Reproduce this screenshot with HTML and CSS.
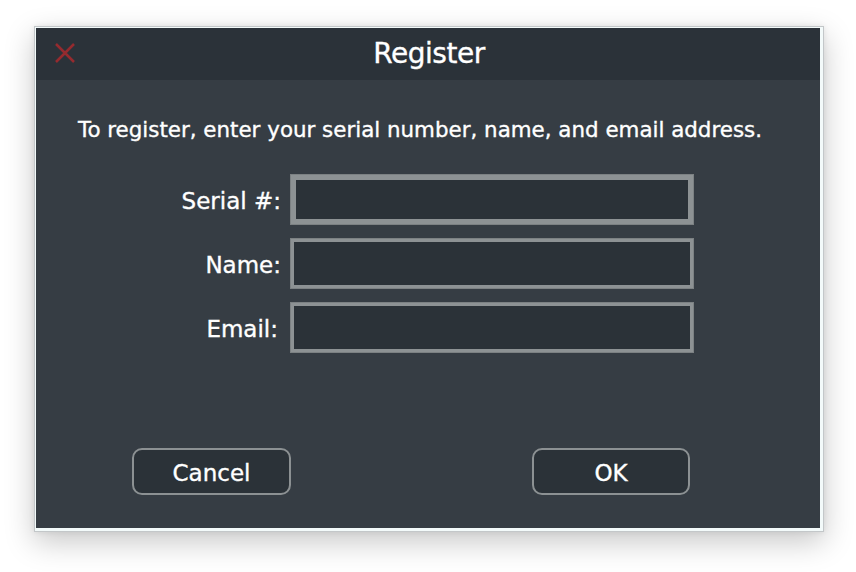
FILE: index.html
```html
<!DOCTYPE html>
<html>
<head>
<meta charset="utf-8">
<title>Register</title>
<link rel="stylesheet" href="styles.css">
</head>
<body>
<div class="window">
  <div class="inner">
    <div class="titlebar">
      <svg class="close" width="20" height="20" viewBox="0 0 20 20">
        <path d="M1 1 L19 19 M19 1 L1 19" stroke="#952b2f" stroke-width="2.5" fill="none"/>
      </svg>
      <div class="title">Register</div>
    </div>
    <div class="content">
      <p class="intro">To register, enter your serial number, name, and email address.</p>
      <div class="form">
        <label class="label">Serial #:</label>
        <div class="field focused"></div>
        <label class="label">Name:</label>
        <div class="field"></div>
        <label class="label label-email">Email:</label>
        <div class="field"></div>
      </div>
      <div class="buttons">
        <div class="btn btn-cancel">Cancel</div>
        <div class="btn btn-ok">OK</div>
      </div>
    </div>
  </div>
</div>
</body>
</html>
```
FILE: styles.css
```css
html, body {
  margin: 0;
  padding: 0;
  background: #ffffff;
}
body {
  width: 856px;
  height: 572px;
  overflow: hidden;
  font-family: "DejaVu Sans", "Liberation Sans", sans-serif;
  color: #ffffff;
  -webkit-text-stroke: 0.35px #ffffff;
}
.window {
  margin: 26px 0 0 34px;
  width: 786px;
  height: 502px;
  border: 1px solid #c3c7c9;
  padding: 1px;
  background: #f3fafa;
  box-shadow: 0 10px 28px rgba(0, 0, 0, 0.22), 0 0 6px rgba(0, 0, 0, 0.08);
}
.inner {
  width: 784px;
  height: 500px;
  background: #363d44;
  display: flex;
  flex-direction: column;
}
.titlebar {
  position: relative;
  height: 52px;
  background: #2b3239;
  display: flex;
  align-items: center;
  justify-content: center;
}
.close {
  position: absolute;
  left: 19px;
  top: 15px;
}
.title {
  font-size: 28px;
  letter-spacing: -0.5px;
  line-height: 52px;
  padding-left: 2px;
}
.content {
  flex: 1;
  display: flex;
  flex-direction: column;
}
.intro {
  margin: 38px 0 0 0;
  padding-right: 16px;
  text-align: center;
  font-size: 21.4px;
  line-height: 24px;
}
.form {
  margin-top: 32px;
  display: grid;
  grid-template-columns: 245px 404px;
  grid-auto-rows: 51px;
  column-gap: 9px;
  row-gap: 13px;
}
.label {
  font-size: 23px;
  display: flex;
  align-items: center;
  justify-content: flex-end;
  padding-top: 2px;
}
.label-email {
  padding-right: 3px;
}
.field {
  box-sizing: border-box;
  background: #2b3238;
  border: 4px solid #8d9294;
  outline: 1px solid #7c8183;
  outline-offset: -1px;
}
.field.focused {
  border-width: 6px;
}
.buttons {
  margin-top: 95px;
  display: flex;
  padding-left: 96px;
  gap: 241px;
}
.btn {
  box-sizing: border-box;
  width: 159px;
  height: 47px;
  border: 2px solid #8c9193;
  border-radius: 10px;
  background: #2b3238;
  font-size: 23px;
  display: flex;
  align-items: center;
  justify-content: center;
  padding-top: 2px;
}
.btn-ok {
  width: 158px;
}
```
